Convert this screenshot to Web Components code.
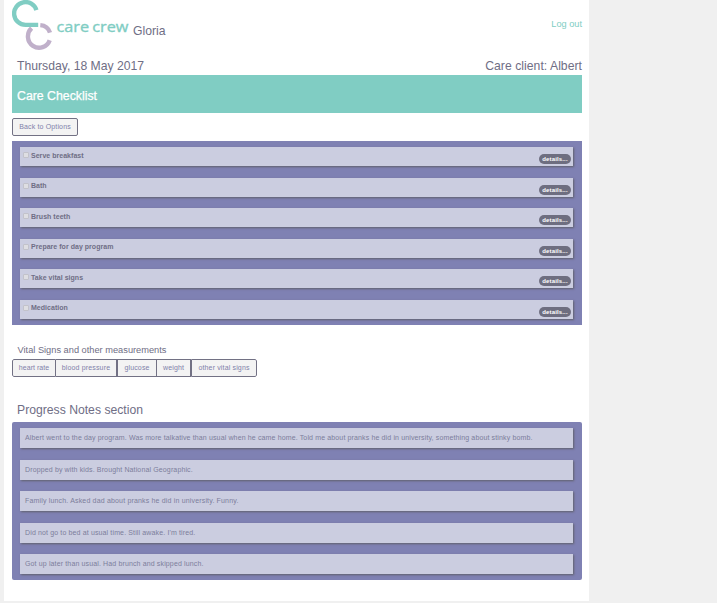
<!DOCTYPE html>
<html lang="en"><head><meta charset="utf-8"><title>Care Checklist</title>
<style>
html{background:#f0f0f0}
body{margin:0;font-family:"Liberation Sans",Arial,sans-serif;color:#6f6e85;overflow:hidden}
</style></head><body>
<care-page></care-page>
<script>
const define=(name,html)=>customElements.define(name,class extends HTMLElement{
  constructor(){super();const t=document.createElement('template');t.innerHTML=html;
    this.attachShadow({mode:'open'}).append(t.content.cloneNode(true));}
});
define('care-logo',`<style>:host{display:block;width:121px;height:50px}svg{display:block}</style>
<svg width="121" height="50" viewBox="0 0 121 50"><g fill="none" stroke-width="4.4">
<path stroke="#c0b0ca" d="M28.3 25.1C33 25.5 36.6 28.3 38 32.6M19.6 28.2A11.2 11.2 0 1 0 37.7 40.2"/>
<path stroke="#80cdc3" d="M24.4 10.1A11.4 11.4 0 1 0 13.5 24.9H26.2"/></g>
<text x="44.5" y="31.5" font-family="Open Sans,Noto Sans,sans-serif" font-size="15" fill="#80cdc3" stroke="#80cdc3" stroke-width=".35" textLength="72" lengthAdjust="spacingAndGlyphs" word-spacing="-1">care crew</text></svg>`);
define('care-button',`<style>:host{display:flex;box-sizing:border-box;height:18px;border:1px solid #727184;background:#f3f3f3;justify-content:center;font-size:7px;line-height:15px;letter-spacing:.15px;color:#7f81aa;white-space:nowrap}:host([round]){border-radius:2px}</style><slot></slot>`);
define('care-group',`<style>:host{display:flex;width:245px;box-sizing:border-box;border-radius:2px;overflow:hidden}</style><slot></slot>`);
define('care-panel',`<style>:host{display:flex;flex-direction:column;box-sizing:border-box;width:570px;background:#7f81b3;padding:6px 9px 6px 8px;justify-content:space-between}:host([round]){border-radius:2px}</style><slot></slot>`);
define('check-row',`<style>:host{display:flex;box-sizing:border-box;height:19px;background:#cbcde0;box-shadow:1px 1px 2px #60606c;padding:0 2px 0 3px;font-size:7px;font-weight:bold;letter-spacing:.03px}
i{width:4px;height:4px;margin-top:5px;border:1px solid #c2c2ca;border-radius:1px;background:#dedee2}
span{margin:4px 0 0 2px;line-height:8.4px;white-space:nowrap}
:host(:nth-child(odd)) span{margin-top:5px}
b{margin:7px 0 0 auto;width:32px;height:10px;border-radius:5px;background:#6e6e80;color:#fff;font-size:6px;line-height:10px;letter-spacing:.15px;text-align:center}</style><i></i><span><slot></slot></span><b>details...</b>`);
define('note-row',`<style>:host{display:block;box-sizing:border-box;height:20px;background:#cbcde0;box-shadow:1px 1px 2px #60606c;padding:0 5px;font-size:7px;letter-spacing:.135px;line-height:20px;color:#7c7d9b;white-space:nowrap}</style><slot></slot>`);
define('care-page',`<style>
:host{display:block;box-sizing:border-box;width:585px;height:601px;margin-left:4px;background:#fff;padding:0 7px 0 8px;font-size:12.2px}
header{display:flex;height:58px}
.user{margin:24px 0 0 0;line-height:14px;font-size:12.2px}
.out{margin:18px 0 0 auto;font-size:9.2px;line-height:12px;color:#80cdc3}
.meta{display:flex;justify-content:space-between;height:17px;line-height:16px;padding-left:5px}
.title{height:38px;box-sizing:border-box;background:#80cdc3;color:#fff;padding:14px 5px;line-height:14px;font-size:12.3px;-webkit-text-stroke:.25px #fff}
.back{width:66px;margin:5px 0}
.checks{height:184px}
.vital{font-size:9.25px;line-height:12px;padding-left:5.5px;margin:19px 0 3px}
.progress{line-height:14px;padding-left:5px;margin:26px 0 5px}
.notes{height:158px}
</style>
<header><care-logo></care-logo><div class="user">Gloria</div><div class="out">Log out</div></header>
<div class="meta"><span>Thursday, 18 May 2017</span><span style="letter-spacing:.03px">Care client: Albert</span></div>
<div class="title">Care Checklist</div>
<care-button class="back" round>Back to Options</care-button>
<care-panel class="checks"><check-row>Serve breakfast</check-row><check-row>Bath</check-row><check-row>Brush teeth</check-row><check-row>Prepare for day program</check-row><check-row>Take vital signs</check-row><check-row>Medication</check-row></care-panel>
<div class="vital">Vital Signs and other measurements</div>
<care-group><care-button style="width:44px;letter-spacing:.03px;border-radius:2px 0 0 2px">heart rate</care-button><care-button style="width:61px;border-left:0">blood pressure</care-button><care-button style="width:40px">glucose</care-button><care-button style="width:34px;border-left:0">weight</care-button><care-button style="width:66px;border-radius:0 2px 2px 0">other vital signs</care-button></care-group>
<div class="progress">Progress Notes section</div>
<care-panel class="notes" round><note-row>Albert went to the day program. Was more talkative than usual when he came home. Told me about pranks he did in university, something about stinky bomb.</note-row><note-row>Dropped by with kids. Brought National Geographic.</note-row><note-row style="letter-spacing:.17px">Family lunch. Asked dad about pranks he did in university. Funny.</note-row><note-row>Did not go to bed at usual time. Still awake. I'm tired.</note-row><note-row>Got up later than usual. Had brunch and skipped lunch.</note-row></care-panel>`);
</script></body></html>
